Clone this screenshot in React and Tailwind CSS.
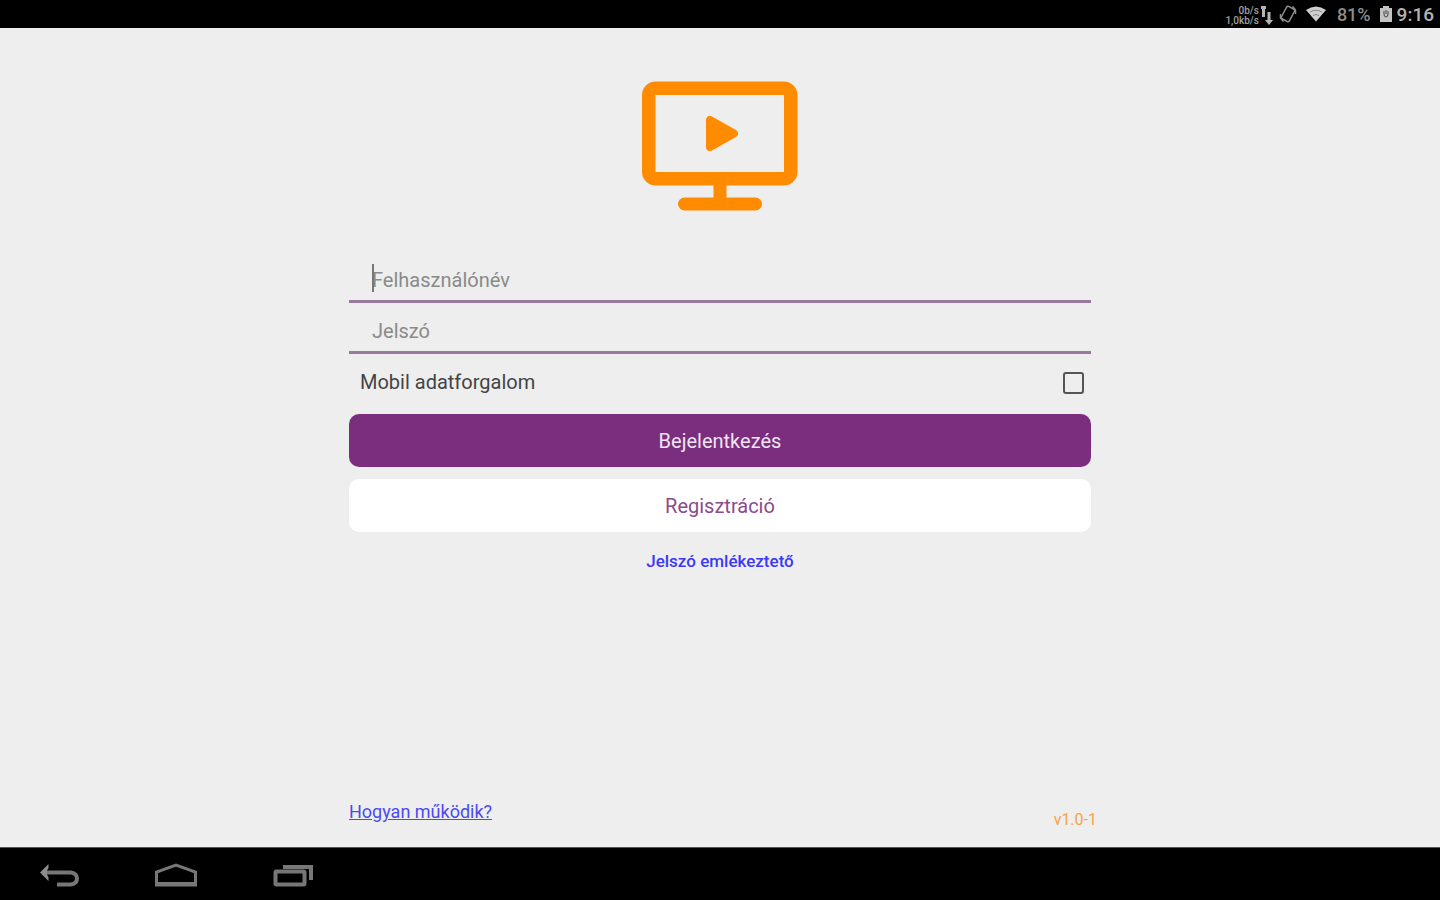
import React, { useState } from 'react';

const TvLogo = () => (
  <svg width="158" height="132" viewBox="0 0 158 132" fill="none" aria-hidden="true">
    <rect x="7.5" y="8" width="142.500" height="91" rx="7" stroke="#ff8c00" strokeWidth="13" />
    <rect x="14" y="14.500" width="129.500" height="78" stroke="#ff8c00" strokeWidth="1" />
    <path d="M79 100v22" stroke="#ff8c00" strokeWidth="13" />
    <path d="M43.500 124h71" stroke="#ff8c00" strokeWidth="13" strokeLinecap="round" />
    <path d="M69 40v27l24-13.500z" fill="#ff8c00" stroke="#ff8c00" strokeWidth="8" strokeLinejoin="round" />
  </svg>
);

const StatusBar = () => (
  <header className="flex h-7 shrink-0 items-center justify-end bg-black pr-1.5 text-[#b4b4b4]">
    <div className="pt-1 text-right text-[10px] leading-[10px] font-medium text-[#a0a0a0]">
      <div>0b/s</div>
      <div>1,0kb/s</div>
    </div>
    <svg width="14" height="28" viewBox="0 0 14 28" fill="currentColor" aria-hidden="true">
      <path d="M2 6h5v3H6v8H3V9H2z" />
      <path d="M8.500 12h3v8H14l-4 5-4-5h2.500z" />
    </svg>
    <svg className="ml-1.5" width="18" height="24" viewBox="0 0 18 24" fill="none" stroke="#8f8f8f" strokeWidth="1.500" aria-hidden="true">
      <rect x="4.500" y="5" width="9" height="14" rx="1.500" transform="rotate(28 9 12)" />
      <path d="M1.500 12v4l3 3.500M16.500 12V8l-3-3.500" />
    </svg>
    <svg className="ml-2" width="22" height="18" viewBox="0 0 22 18" aria-hidden="true">
      <path d="M1 5Q11-2 21 5L11 16.500z" fill="#d0d0d0" />
      <path d="M5 7q6-3.500 12 0M8 10.500q3-2 6 0" fill="none" stroke="#888" strokeWidth="1" />
    </svg>
    <span className="ml-2.5 pt-0.5 text-lg leading-6 font-medium text-[#8c8c8c]">81%</span>
    <svg className="ml-2" width="14" height="18" viewBox="0 0 14 18" aria-hidden="true">
      <path d="M1 3h3V1h6v2h3v14H1z" fill="#c4c4c4" />
      <path d="M7 5v4M5 6v3q0 3 2 3t2-3V6" fill="none" stroke="#444" strokeWidth="1" />
    </svg>
    <span className="ml-1 pt-px text-[19px] leading-6 font-medium">9:16</span>
  </header>
);

const NavBar = () => (
  <nav className="flex h-[53px] shrink-0 items-center gap-[74px] border-t border-[#555] bg-black pt-1 pl-[38px] text-[#777]">
    <button type="button" aria-label="Vissza">
      <svg width="42" height="26" viewBox="0 0 42 26" fill="none" stroke="currentColor" strokeWidth="3">
        <path d="M7 9.500h26q6 1 6 6T33 21.500H19" strokeWidth="4" />
        <path d="M2 9.500L10.500 1v4L9 7.500v4l1.500 3V18z" fill="#8c8c8c" stroke="none" />
      </svg>
    </button>
    <button type="button" aria-label="Kezdőlap">
      <svg width="44" height="26" viewBox="0 0 44 26" fill="none" stroke="currentColor" strokeWidth="3">
        <path d="M2.500 22V9L22 2l19.500 7v13z" />
        <path d="M4 20.500h36" />
      </svg>
    </button>
    <button type="button" aria-label="Legutóbbi alkalmazások">
      <svg width="42" height="26" viewBox="0 0 42 26" fill="none" stroke="currentColor" strokeWidth="3">
        <rect x="3.500" y="8.500" width="29" height="13" rx="1" strokeWidth="4" />
        <path d="M11 4h28v13" strokeWidth="4" />
      </svg>
    </button>
  </nav>
);

const App = () => {
  const [username, setUsername] = useState('');
  const [password, setPassword] = useState('');
  const [mobileData, setMobileData] = useState(false);

  return (
    <div className="flex min-h-screen flex-col bg-[#eeeeee] font-[Roboto,sans-serif]">
      <StatusBar />

      <main className="mx-auto flex w-full max-w-[742px] flex-1 flex-col">
        <div className="flex justify-center pt-[52px] pb-10">
          <TvLogo />
        </div>

        <form className="flex flex-col" onSubmit={(e) => e.preventDefault()}>
          <div className="relative">
            <input
              type="text"
              aria-label="Felhasználónév"
              placeholder="Felhasználónév"
              value={username}
              onChange={(e) => setUsername(e.target.value)}
              className="h-[51px] w-full border-b-[3px] border-[#987a9b] bg-transparent px-[23px] pt-2 text-xl text-[#333] outline-none placeholder:text-[#8a8a8a]"
            />
            {/* text cursor */}
            {!username && <span className="absolute top-3 left-[23px] h-7 w-0.5 bg-[#777]" />}
          </div>
          <input
            type="password"
            aria-label="Jelszó"
            placeholder="Jelszó"
            value={password}
            onChange={(e) => setPassword(e.target.value)}
            className="h-[51px] w-full border-b-[3px] border-[#987a9b] bg-transparent px-[23px] pt-2 text-xl text-[#333] outline-none placeholder:text-[#8a8a8a]"
          />

          <div className="flex h-[60px] items-center justify-between pr-[7px] pb-1 pl-[11px]">
            <label htmlFor="mobile-data" className="text-xl text-[#444]">Mobil adatforgalom</label>
            <input
              id="mobile-data"
              type="checkbox"
              checked={mobileData}
              onChange={(e) => setMobileData(e.target.checked)}
              className="mt-0.5 h-[22px] w-[21px] appearance-none rounded-[3px] border-2 border-[#555] checked:bg-[#7b2d7e]"
            />
          </div>

          <button type="submit" className="h-[53px] rounded-[10px] bg-[#7b2d7e] text-xl text-[#f0e4f0]">
            Bejelentkezés
          </button>
          <button type="button" className="mt-3 h-[53px] rounded-[10px] bg-white text-xl text-[#8a4a8d]">
            Regisztráció
          </button>
        </form>

        <a href="#reminder" className="mt-[17px] self-center text-[17px] leading-6 font-medium text-[#3a3af5]">
          Jelszó emlékeztető
        </a>

        <footer className="mt-auto -mr-1.5 flex items-end justify-between pb-[15px]">
          <a href="#help" className="mb-2 text-lg leading-6 text-[#4a4af0] underline">
            Hogyan működik?
          </a>
          <span className="text-base text-[#f5a348]">v1.0-1</span>
        </footer>
      </main>

      <NavBar />
    </div>
  );
};

export default App;
